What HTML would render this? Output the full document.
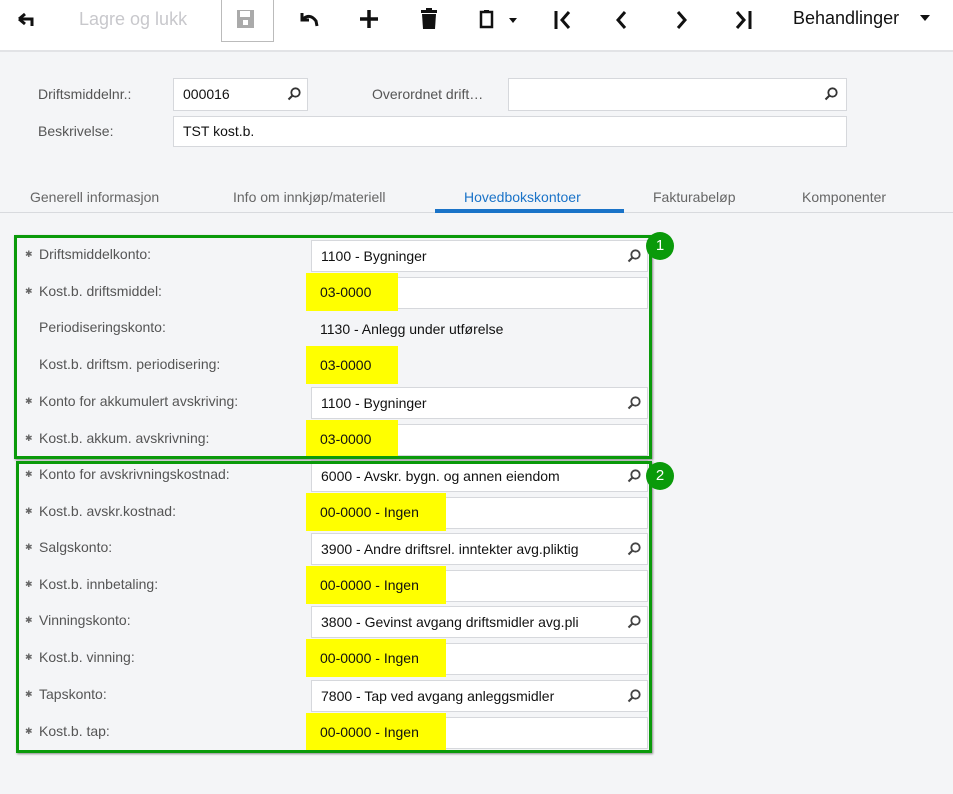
<!DOCTYPE html>
<html><head><meta charset="utf-8"><style>
*{box-sizing:border-box;margin:0;padding:0}
body{width:953px;height:794px;overflow:hidden;background:#f4f5f7;font-family:"Liberation Sans",sans-serif;font-size:14px;color:#222;position:relative}
.a{position:absolute}
.tb{left:0;top:0;width:953px;height:52px;background:#fff;border-bottom:2px solid #e2e3e6}
.lbl{position:absolute;color:#555;font-size:14px}
.inp{position:absolute;background:#fff;border:1px solid #d6d8dc;height:32px;line-height:30px;padding-left:9px;font-size:14px;color:#111}
.srch{position:absolute;right:6px;top:8px}
.hl{position:absolute;background:#ffff00;height:38px;line-height:38px;padding-left:14px;color:#111}
.star{color:#666;font-size:9px;position:absolute;left:25px}
.tab{position:absolute;top:189px;color:#666;font-size:14px}
.circ{position:absolute;width:28px;height:28px;border-radius:50%;background:#0a9a0a;color:#fff;text-align:center;line-height:28px;font-size:15px}
.box{position:absolute;border:3px solid #0a9a0a;box-shadow:1px 1px 2px #888}
</style></head><body>
<div class="a tb"></div>
<svg class="a" style="left:16px;top:10px" width="24" height="20" viewBox="0 0 24 20"><path d="M3 9 L9 4 M3 9 L9 14 M3 9 H16 V16" stroke="#111" stroke-width="3" fill="none"/></svg>
<div class="a" style="left:79px;top:9px;color:#c8c8cc;font-size:18px">Lagre og lukk</div>
<div class="a" style="left:221px;top:-2px;width:53px;height:44px;border:1px solid #bbb;border-top:none"></div>
<svg class="a" style="left:236px;top:9px" width="20" height="20"><rect x="1" y="1" width="17" height="18" fill="#aaa"/><rect x="4" y="2" width="10" height="6" fill="#fff"/><rect x="7" y="11" width="5" height="5" fill="#fff"/></svg>
<svg class="a" style="left:298px;top:10px" width="22" height="20"><path d="M4 3 V10 H11" stroke="#111" stroke-width="3" fill="none"/><path d="M5 9 Q12 3 18 11 L19 16" stroke="#111" stroke-width="3" fill="none"/></svg>
<svg class="a" style="left:359px;top:9px" width="20" height="20"><path d="M10 1 V19 M1 10 H19" stroke="#111" stroke-width="3.5"/></svg>
<svg class="a" style="left:420px;top:8px" width="18" height="22"><rect x="1" y="2" width="16" height="3" fill="#111"/><rect x="6" y="0" width="6" height="3" fill="#111"/><path d="M2 6 H16 L15 21 H3 Z" fill="#111"/></svg>
<svg class="a" style="left:478px;top:8px" width="40" height="22"><rect x="3" y="4" width="11" height="15" stroke="#111" stroke-width="2.5" fill="none"/><rect x="6" y="2" width="5" height="3" fill="#111"/><path d="M31 10 L39 10 L35 15Z" fill="#111"/></svg>
<svg class="a" style="left:553px;top:9px" width="20" height="22"><path d="M3 2 V20" stroke="#111" stroke-width="3"/><path d="M16 3 L9 11 L16 19" stroke="#111" stroke-width="3" fill="none"/></svg>
<svg class="a" style="left:612px;top:9px" width="18" height="22"><path d="M13 3 L6 11 L13 19" stroke="#111" stroke-width="3" fill="none"/></svg>
<svg class="a" style="left:673px;top:9px" width="18" height="22"><path d="M5 3 L12 11 L5 19" stroke="#111" stroke-width="3" fill="none"/></svg>
<svg class="a" style="left:734px;top:9px" width="22" height="22"><path d="M3 3 L10 11 L3 19" stroke="#111" stroke-width="3" fill="none"/><path d="M16 2 V20" stroke="#111" stroke-width="3"/></svg>
<div class="a" style="left:793px;top:8px;font-size:18px;color:#111">Behandlinger</div>
<svg class="a" style="left:920px;top:15px" width="10" height="6"><path d="M0 0 H10 L5 6Z" fill="#111"/></svg>

<div class="lbl" style="left:38px;top:86px">Driftsmiddelnr.:</div>
<div class="inp" style="left:173px;top:78px;width:135px;height:33px;line-height:31px">000016<svg class="srch" width="14" height="14"><circle cx="8.5" cy="5.5" r="4.2" stroke="#333" stroke-width="1.8" fill="none"/><path d="M5.5 8.5 L1.5 12.5" stroke="#333" stroke-width="2"/></svg></div>
<div class="lbl" style="left:372px;top:86px">Overordnet drift…</div>
<div class="inp" style="left:508px;top:78px;width:339px;height:33px"><svg class="srch" width="14" height="14" style="right:8px"><circle cx="8.5" cy="5.5" r="4.2" stroke="#333" stroke-width="1.8" fill="none"/><path d="M5.5 8.5 L1.5 12.5" stroke="#333" stroke-width="2"/></svg></div>
<div class="lbl" style="left:38px;top:123px">Beskrivelse:</div>
<div class="inp" style="left:173px;top:116px;width:674px;height:31px;line-height:29px">TST kost.b.</div>

<div class="tab" style="left:30px">Generell informasjon</div>
<div class="tab" style="left:233px">Info om innkjøp/materiell</div>
<div class="tab" style="left:464px;color:#1a73c8">Hovedbokskontoer</div>
<div class="tab" style="left:653px">Fakturabeløp</div>
<div class="tab" style="left:802px">Komponenter</div>
<div class="a" style="left:0;top:212px;width:953px;height:1px;background:#d8dade"></div>
<div class="a" style="left:435px;top:209px;width:189px;height:4px;background:#1a73c8"></div>

<div id="rows"></div>
<script>
var S='<svg class="srch" width="14" height="14"><circle cx="8.5" cy="5.5" r="4.2" stroke="#444" stroke-width="1.8" fill="none"/><path d="M5.5 8.5 L1.5 12.5" stroke="#444" stroke-width="2"/></svg>';
var rows=[
[240,1,"Driftsmiddelkonto:","1100 - Bygninger",1,0],
[277,1,"Kost.b. driftsmiddel:","03-0000",0,92],
[313,0,"Periodiseringskonto:","1130 - Anlegg under utførelse",2,0],
[350,0,"Kost.b. driftsm. periodisering:","03-0000",2,92],
[387,1,"Konto for akkumulert avskriving:","1100 - Bygninger",1,0],
[424,1,"Kost.b. akkum. avskrivning:","03-0000",0,92],
[460,1,"Konto for avskrivningskostnad:","6000 - Avskr. bygn. og annen eiendom",1,0],
[497,1,"Kost.b. avskr.kostnad:","00-0000 - Ingen",0,140],
[533,1,"Salgskonto:","3900 - Andre driftsrel. inntekter avg.pliktig",1,0],
[570,1,"Kost.b. innbetaling:","00-0000 - Ingen",0,140],
[606,1,"Vinningskonto:","3800 - Gevinst avgang driftsmidler avg.pli",1,0],
[643,1,"Kost.b. vinning:","00-0000 - Ingen",0,140],
[680,1,"Tapskonto:","7800 - Tap ved avgang anleggsmidler",1,0],
[717,1,"Kost.b. tap:","00-0000 - Ingen",0,140]];
var h='';
rows.forEach(function(r){var y=r[0];
 if(r[1])h+='<div class="star" style="top:'+(y+9)+'px">✱</div>';
 h+='<div class="lbl" style="left:39px;top:'+(y+6)+'px">'+r[2]+'</div>';
 if(r[5]){
  if(r[4]!=2)h+='<div class="inp" style="left:311px;top:'+y+'px;width:337px"></div>';
  h+='<div class="hl" style="left:306px;top:'+(y-4)+'px;width:'+r[5]+'px">'+r[3]+'</div>';
 } else if(r[4]==2)h+='<div class="a" style="left:320px;top:'+(y+8)+'px;color:#111">'+r[3]+'</div>';
 else h+='<div class="inp" style="left:311px;top:'+y+'px;width:337px;">'+r[3]+(r[4]?S:'')+'</div>';
});
document.getElementById('rows').innerHTML=h;
</script>
<div class="box" style="left:14px;top:235px;width:638px;height:224px"></div>
<div class="box" style="left:16px;top:461px;width:636px;height:292px"></div>
<div class="circ" style="left:646px;top:232px">1</div>
<div class="circ" style="left:646px;top:462px">2</div>
</body></html>
